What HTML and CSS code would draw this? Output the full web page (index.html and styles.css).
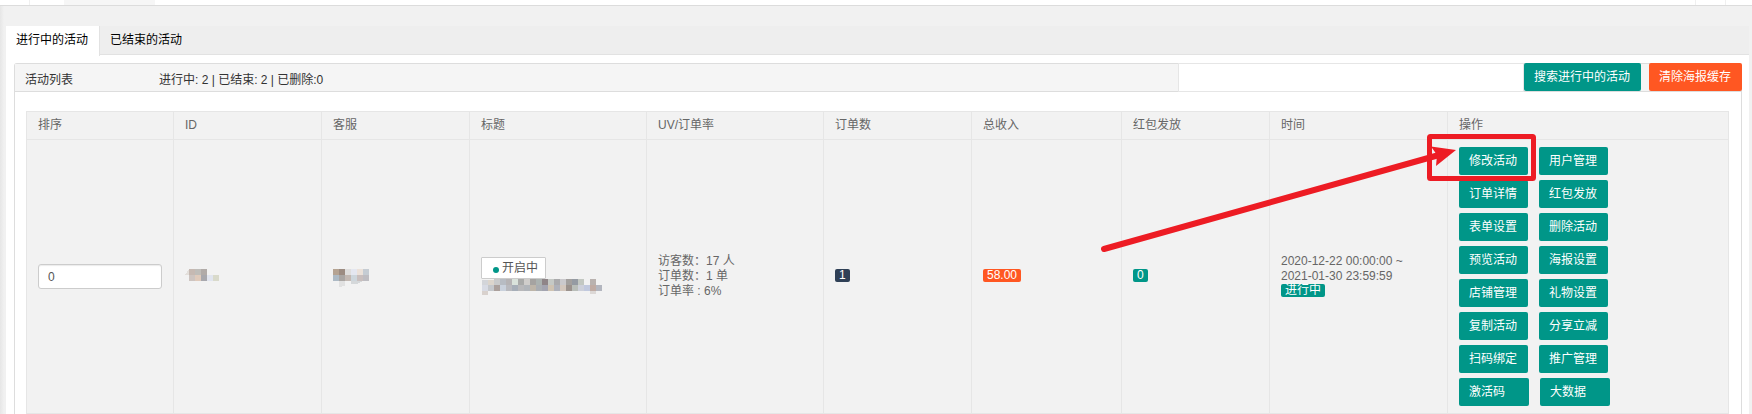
FILE: index.html
```html
<!DOCTYPE html>
<html lang="zh-CN">
<head>
    <meta charset="UTF-8">
    <meta name="viewport" content="width=device-width, initial-scale=1.0">
    <title>活动列表</title>
    <link rel="stylesheet" href="styles.css">
</head>
<body>
    <div class="top-strip">
        <div class="strip-home"></div>
        <div class="strip-tab"></div>
        <div class="strip-tools"></div>
    </div>

    <div class="page">
        <nav class="tabs">
            <a href="#" class="tab active">进行中的活动</a>
            <a href="#" class="tab">已结束的活动</a>
        </nav>

        <div class="panel">
            <div class="panel-header">
                <div class="panel-title">活动列表</div>
                <div class="panel-stats">进行中: 2 | 已结束: 2 | 已删除:0</div>
                <form class="search">
                    <input type="text" class="search-input" name="keyword" aria-label="搜索">
                    <button type="button" class="btn">搜索进行中的活动</button>
                    <button type="button" class="btn btn-danger">清除海报缓存</button>
                </form>
            </div>

            <div class="panel-body">
                <table class="list">
                    <colgroup>
                        <col class="col-sort"><col class="col-s"><col class="col-s">
                        <col class="col-m"><col class="col-m">
                        <col class="col-s"><col class="col-income"><col class="col-s">
                        <col class="col-time"><col>
                    </colgroup>
                    <thead>
                        <tr>
                            <th>排序</th>
                            <th>ID</th>
                            <th>客服</th>
                            <th>标题</th>
                            <th>UV/订单率</th>
                            <th>订单数</th>
                            <th>总收入</th>
                            <th>红包发放</th>
                            <th>时间</th>
                            <th>操作</th>
                        </tr>
                    </thead>
                    <tbody>
                        <tr class="row-hover">
                            <td><input type="text" class="sort-input" name="sort" value="0" aria-label="排序"></td>
                            <td>
                                <svg class="mosaic" width="36" height="20" viewBox="0 0 36 20" shape-rendering="crispEdges">
                                    <path fill="#e3dfdb" d="M0 8l4-6v6z"/>
                                    <path fill="#c6b9b2" d="M4 2h6v6H4z"/><path fill="#bfbdb9" d="M10 2h6v6h-6z"/><path fill="#b1aba8" d="M16 2h6v6h-6z"/>
                                    <path fill="#cdc4c0" d="M4 8h6v6H4z"/><path fill="#dfcabb" d="M10 8h6v6h-6z"/><path fill="#a8a8ad" d="M16 8h6v6h-6z"/>
                                    <path fill="#e1e5ef" d="M22 8h6v6h-6z"/><path fill="#d9dacb" d="M28 8h6v6h-6z"/>
                                </svg>
                            </td>
                            <td>
                                <svg class="mosaic" width="36" height="20" viewBox="0 0 36 20" shape-rendering="crispEdges">
                                    <path fill="#b5a392" d="M0 2h6v6H0z"/><path fill="#9c8c82" d="M6 2h6v6H6z"/><path fill="#dfdedd" d="M12 2h6v6h-6z"/>
                                    <path fill="#e4e7f0" d="M18 2h6v6h-6z"/><path fill="#ebe1d9" d="M24 2h6v6h-6z"/><path fill="#c5ccd3" d="M30 2h6v6h-6z"/>
                                    <path fill="#adbac5" d="M0 8h6v6H0z"/><path fill="#aaa6a3" d="M6 8h6v6H6z"/><path fill="#c3b9b3" d="M12 8h6v6h-6z"/>
                                    <path fill="#cdd6dc" d="M18 8h6v6h-6z"/><path fill="#c9bfbe" d="M24 8h6v6h-6z"/><path fill="#bebdc2" d="M30 8h6v6h-6z"/>
                                    <path fill="#e1e1e1" d="M6 14h6v5l-6 1z"/><path fill="#d5d8da" d="M18 14h12l-6 3h-6z"/>
                                </svg>
                            </td>
                            <td>
                                <button type="button" class="status"><span class="dot"></span>开启中</button>
                                <svg class="mosaic" width="122" height="17" viewBox="0 0 122 17" shape-rendering="crispEdges">
                                    <path fill="#d3d5d9" d="M1 1h6v5H1z"/><path fill="#dcd5cc" d="M7 1h6v5H7z"/><path fill="#c9cacb" d="M13 0h6v6h-6z"/><path fill="#b7bcc3" d="M19 0h6v6h-6z"/>
                                    <path fill="#b5b3b5" d="M25 0h6v6h-6z"/><path fill="#d9e2db" d="M31 0h6v6h-6z"/><path fill="#a9aaa9" d="M37 0h6v6h-6z"/><path fill="#cfcdcb" d="M43 0h6v6h-6z"/>
                                    <path fill="#a5a3a1" d="M49 0h6v6h-6z"/><path fill="#abb2b0" d="M55 0h6v6h-6z"/><path fill="#8f8588" d="M61 0h6v6h-6z"/><path fill="#c5c9c5" d="M67 0h6v6h-6z"/>
                                    <path fill="#aaaaac" d="M73 0h6v6h-6z"/><path fill="#cac9cc" d="M79 0h6v6h-6z"/><path fill="#a3a09e" d="M85 0h6v6h-6z"/><path fill="#959ba3" d="M91 0h6v6h-6z"/>
                                    <path fill="#c3c8c2" d="M97 0h6v6h-6z"/><path fill="#b9b2af" d="M109 0h6v6h-6z"/>
                                    <path fill="#d8dbe4" d="M1 6h6v6H1z"/><path fill="#c5c8cc" d="M7 6h6v6H7z"/><path fill="#aba09c" d="M13 6h6v6h-6z"/><path fill="#c9d1dc" d="M19 6h6v6h-6z"/>
                                    <path fill="#b8b9be" d="M25 6h6v6h-6z"/><path fill="#a6aeb8" d="M31 6h6v6h-6z"/><path fill="#b8b8ba" d="M37 6h6v6h-6z"/><path fill="#b1b5ba" d="M43 6h6v6h-6z"/>
                                    <path fill="#bdb5a9" d="M49 6h6v6h-6z"/><path fill="#a9adb2" d="M55 6h6v6h-6z"/><path fill="#a3a4b0" d="M61 6h6v6h-6z"/><path fill="#cfc3b2" d="M67 6h6v6h-6z"/>
                                    <path fill="#aeb1ba" d="M73 6h6v6h-6z"/><path fill="#d3c7bd" d="M79 6h6v6h-6z"/><path fill="#9b928d" d="M85 6h6v6h-6z"/><path fill="#b9beb9" d="M91 6h6v6h-6z"/>
                                    <path fill="#cdd0da" d="M97 6h6v6h-6z"/><path fill="#c1c9de" d="M103 6h6v6h-6z"/><path fill="#bfaba3" d="M109 6h6v6h-6z"/><path fill="#b3b6bf" d="M115 6h6v6h-6z"/>
                                    <path fill="#d8d1cd" d="M1 12h6v4H1z"/><path fill="#dcd8d6" d="M109 12h6v3h-6z"/>
                                </svg>
                            </td>
                            <td>访客数：17 人<br>订单数：1 单<br>订单率 : 6%</td>
                            <td><span class="badge badge-dark">1</span></td>
                            <td><span class="badge badge-orange">58.00</span></td>
                            <td><span class="badge">0</span></td>
                            <td>2020-12-22 00:00:00 ~<br>2021-01-30 23:59:59<br><span class="badge">进行中</span></td>
                            <td class="cell-actions">
                                <div class="actions">
                                    <div class="action-row"><button type="button" class="btn">修改活动</button><button type="button" class="btn">用户管理</button></div>
                                    <div class="action-row"><button type="button" class="btn">订单详情</button><button type="button" class="btn">红包发放</button></div>
                                    <div class="action-row"><button type="button" class="btn">表单设置</button><button type="button" class="btn">删除活动</button></div>
                                    <div class="action-row"><button type="button" class="btn">预览活动</button><button type="button" class="btn">海报设置</button></div>
                                    <div class="action-row"><button type="button" class="btn">店铺管理</button><button type="button" class="btn">礼物设置</button></div>
                                    <div class="action-row"><button type="button" class="btn">复制活动</button><button type="button" class="btn">分享立减</button></div>
                                    <div class="action-row"><button type="button" class="btn">扫码绑定</button><button type="button" class="btn">推广管理</button></div>
                                    <div class="action-row"><button type="button" class="btn btn-wide">激活码</button><button type="button" class="btn btn-wide">大数据</button></div>
                                    <!-- 标注：箭头和红框 -->
                                    <svg class="marker" width="440" height="130" viewBox="0 0 440 130">
                                        <rect x="330.500" y="9.500" width="104" height="42" rx="1" fill="none" stroke="#ed1c24" stroke-width="5"/>
                                        <path d="M5 122L340 28" stroke="#ed1c24" stroke-width="6" stroke-linecap="round"/>
                                        <path d="M357 23L332 19.500L338 28L337 39z" fill="#ed1c24"/>
                                    </svg>
                                </div>
                            </td>
                        </tr>
                        <tr class="row-next">
                            <td></td><td></td><td></td><td></td><td></td><td></td><td></td><td></td><td></td><td></td>
                        </tr>
                    </tbody>
                </table>
            </div>
        </div>
    </div>
</body>
</html>
```
FILE: styles.css
```css
:root {
    --green: #009688;
    --orange: #ff5722;
    --dark: #2f4056;
    --line: #e6e6e6;
    --text: #666;
}

* {
    margin: 0;
    padding: 0;
    box-sizing: border-box;
}

body {
    min-height: 100vh;
    display: flex;
    flex-direction: column;
    background: linear-gradient(to right, #e6e6e6, #f1f1f1 4px);
    color: #333;
    font: 12px/15px "Liberation Sans", "Noto Sans CJK SC", sans-serif;
}

button, input {
    font: inherit;
}

.top-strip {
    display: flex;
    height: 6px;
    background: #fff;
    border-bottom: 1px solid #dcdcdc;
}

.strip-home {
    width: 30px;
    border-right: 1px solid #f0f0f0;
}

.strip-tab {
    width: 91px;
    margin-left: 34px;
    background: #f6f6f6;
}

.strip-tools {
    width: 31px;
    margin: 0 26px 0 auto;
    border: solid #f0f0f0;
    border-width: 0 1px;
}

.page {
    flex: 1;
    display: flex;
    flex-direction: column;
    margin: 20px 3px 0 6px;
    background: #fff;
}

/* 选项卡 */
.tabs {
    display: flex;
    height: 29px;
    background: #eee;
    border-bottom: 1px solid #e2e2e2;
}

.tab {
    height: 28px;
    padding: 0 11px 0 10px;
    line-height: 28px;
    color: #000;
    text-decoration: none;
}

.tab.active {
    height: 30px;
    background: #fff;
    border-right: 1px solid #e2e2e2;
}

/* 面板 */
.panel {
    flex: 1;
    margin: 8px 7px 0 8px;
    border: 1px solid #ddd;
    border-bottom: none;
    border-radius: 3px 3px 0 0;
}

.panel-header {
    display: flex;
    height: 28px;
    background: #f5f5f5;
    border-bottom: 1px solid #ddd;
    line-height: 32px;
}

.panel-title {
    width: 133px;
    padding-left: 10px;
}

.panel-stats {
    flex: 1;
    padding-left: 11px;
}

.search {
    display: flex;
    margin: -1px;
}

.search-input {
    width: 346px;
    border: 1px solid var(--line);
    padding: 0 10px;
    background: #fff;
    outline: none;
}

.btn {
    height: 28px;
    padding: 0 11px 0 10px;
    border: none;
    border-radius: 2px;
    background: var(--green);
    color: #fff;
    line-height: 28px;
    white-space: nowrap;
    cursor: pointer;
}

.search .btn-danger {
    margin-left: 8px;
    background: var(--orange);
}

.panel-body {
    padding: 19px 12px 0 11px;
}

/* 表格 */
.list {
    width: 100%;
    table-layout: fixed;
    border-collapse: collapse;
    color: var(--text);
}

.col-sort { width: 147px; }
.col-s { width: 148px; }
.col-m { width: 177px; }
.col-income { width: 150px; }
.col-time { width: 178px; }

.list th,
.list td {
    border: 1px solid var(--line);
    padding: 0 11px;
    text-align: left;
    font-weight: normal;
}

.list th {
    height: 28px;
    background: #f2f2f2;
}

.row-hover td {
    background: #f2f2f2;
}

.list .cell-actions {
    padding: 7px 11px;
}

.list .row-next td {
    height: 1px;
    border-bottom: none;
}

.sort-input {
    display: block;
    width: 100%;
    height: 25px;
    padding: 0 9px;
    border: 1px solid #ccc;
    border-radius: 3px;
    background: #fff;
    box-shadow: inset 0 1px 1px rgba(0, 0, 0, 0.08);
    color: #555;
}

.mosaic {
    display: block;
}

.status {
    display: flex;
    align-items: center;
    height: 22px;
    padding: 0 7px 0 11px;
    border: 1px solid #ccc;
    border-radius: 1px;
    background: #fff;
    color: #555;
}

.dot {
    width: 6px;
    height: 6px;
    margin: 3px 3px 0 0;
    border-radius: 50%;
    background: var(--green);
}

.badge {
    display: inline-block;
    height: 13px;
    padding: 0 4px;
    border-radius: 2px;
    background: var(--green);
    color: #fff;
    line-height: 13px;
    vertical-align: top;
}

.badge-dark {
    background: var(--dark);
}

.badge-orange {
    background: var(--orange);
}

.actions {
    position: relative;
    display: flex;
    flex-direction: column;
    gap: 5px;
}

.action-row {
    display: flex;
    gap: 11px;
}

.btn-wide {
    width: 70px;
    text-align: left;
}

.marker {
    position: absolute;
    top: -20px;
    left: -360px;
    pointer-events: none;
}
```
